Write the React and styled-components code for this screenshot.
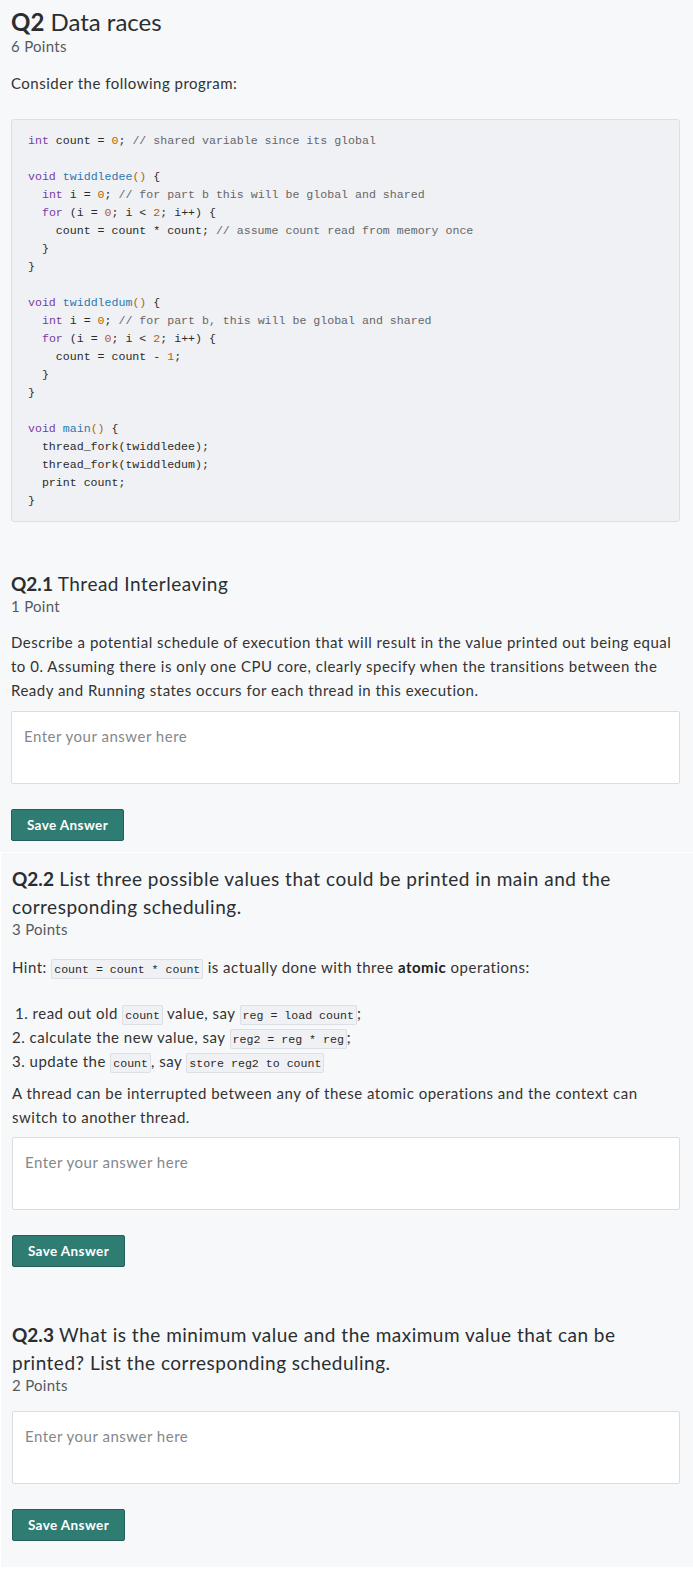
import React from 'react';
import styled, { createGlobalStyle } from 'styled-components';

const GlobalStyle = createGlobalStyle`
  html, body {
    margin: 0;
    padding: 0;
    background: #ffffff;
  }
  body {
    font-family: Lato, "Open Sans", "Liberation Sans", sans-serif;
    color: #333;
  }
`;

const Page = styled.div`
  width: 693px;
  padding-bottom: 20px;
`;

const Panel = styled.section`
  background: #f7f8fa;
  margin-left: ${props => (props.inset ? '1px' : '0')};
  margin-top: ${props => (props.inset ? '1px' : '0')};
  padding: ${props => props.pad || '0'};
  padding-right: 13px;
  padding-left: 11px;
`;

const MainTitle = styled.h1`
  margin: 0;
  font-size: 24px;
  line-height: 32px;
  font-weight: 400;
  color: #2a2e31;

  b {
    font-weight: 700;
  }
`;

const SubTitle = styled.h2`
  margin: ${props => props.mt || '0'} 0 0;
  font-size: 19px;
  line-height: 28px;
  letter-spacing: 0.5px;
  font-weight: 400;
  color: #2a2e31;

  b {
    font-weight: 700;
    letter-spacing: 0;
  }
`;

const Points = styled.div`
  margin-top: -2px;
  font-size: 15px;
  line-height: 20px;
  letter-spacing: 0.3px;
  color: #555a5f;
`;

const Text = styled.p`
  margin: ${props => props.mt || '0'} 0 ${props => props.mb || '0'};
  font-size: 15px;
  line-height: 24px;
  letter-spacing: 0.5px;
  color: #333;
  padding-left: ${props => props.indent || '0'};

  b {
    font-weight: 700;
    color: #222;
  }
`;

const CodeBlock = styled.pre`
  margin: 24px 0 0;
  padding: 12px 16px 11px;
  background: #f0f1f5;
  border: 1px solid #dcdfe5;
  border-radius: 3px;
  font-family: "Liberation Mono", "DejaVu Sans Mono", monospace;
  font-size: 11.6px;
  line-height: 18px;
  color: #2a2a2a;
  white-space: pre;
  overflow: hidden;
`;

const Kw = styled.span`
  color: #7b3aa3;
`;

const Fn = styled.span`
  color: #2b78ad;
`;

const Num = styled.span`
  color: #b0640e;
`;

const Cm = styled.span`
  color: #666;
`;

const InlineCode = styled.code`
  font-family: "Liberation Mono", "DejaVu Sans Mono", monospace;
  font-size: 11.6px;
  line-height: 1;
  letter-spacing: 0;
  background: #f0f1f5;
  border: 1px solid #dcdfe5;
  border-radius: 2px;
  padding: 3px 2px 2px;
  color: #2a2a2a;
`;

const Answer = styled.textarea`
  display: block;
  box-sizing: border-box;
  width: 100%;
  height: 73px;
  margin-top: ${props => props.mt || '9px'};
  padding: 13px 12px;
  border: 1px solid #dcdde3;
  border-radius: 2px;
  background: #ffffff;
  font-family: Lato, "Open Sans", "Liberation Sans", sans-serif;
  font-size: 15px;
  line-height: 22px;
  letter-spacing: 0.5px;
  resize: none;
  outline: none;

  &::placeholder {
    color: #84888c;
  }
`;

const SaveButton = styled.button`
  display: block;
  box-sizing: border-box;
  width: 113px;
  height: 32px;
  margin-top: 25px;
  padding: 0;
  background: #2f7c73;
  border: 1px solid #235f58;
  border-radius: 2px;
  color: #ffffff;
  font-family: Lato, "Open Sans", "Liberation Sans", sans-serif;
  font-size: 13.5px;
  font-weight: 700;
  letter-spacing: 0.4px;
  cursor: pointer;
`;

const Part = styled.div`
  padding-bottom: ${props => props.pb || '0'};
`;

const program = (
  <>
    <Kw>int</Kw> count = <Num>0</Num>; <Cm>// shared variable since its global</Cm>
    {'\n\n'}
    <Kw>void</Kw> <Fn>twiddledee</Fn><Num>()</Num> {'{'}
    {'\n  '}
    <Kw>int</Kw> i = <Num>0</Num>; <Cm>// for part b this will be global and shared</Cm>
    {'\n  '}
    <Kw>for</Kw> (i = <Num>0</Num>; i {'<'} <Num>2</Num>; i++) {'{'}
    {'\n    '}count = count * count; <Cm>// assume count read from memory once</Cm>
    {'\n  }\n}\n\n'}
    <Kw>void</Kw> <Fn>twiddledum</Fn><Num>()</Num> {'{'}
    {'\n  '}
    <Kw>int</Kw> i = <Num>0</Num>; <Cm>// for part b, this will be global and shared</Cm>
    {'\n  '}
    <Kw>for</Kw> (i = <Num>0</Num>; i {'<'} <Num>2</Num>; i++) {'{'}
    {'\n    '}count = count - <Num>1</Num>;
    {'\n  }\n}\n\n'}
    <Kw>void</Kw> <Fn>main</Fn><Num>()</Num> {'{'}
    {'\n  thread_fork(twiddledee);\n  thread_fork(twiddledum);\n  print count;\n}'}
  </>
);

export default function App() {
  return (
    <Page>
      <GlobalStyle />
      <Panel pad="6px 0 11px">
        <MainTitle>
          <b>Q2</b> Data races
        </MainTitle>
        <Points>6 Points</Points>
        <Text mt="15px">Consider the following program:</Text>
        <CodeBlock>{program}</CodeBlock>

        <SubTitle mt="48px">
          <b>Q2.1</b> Thread Interleaving
        </SubTitle>
        <Points>1 Point</Points>
        <Text mt="14px">
          Describe a potential schedule of execution that will result in the value printed out being equal
          to 0. Assuming there is only one CPU core, clearly specify when the transitions between the
          Ready and Running states occurs for each thread in this execution.
        </Text>
        <Answer placeholder="Enter your answer here" />
        <SaveButton>Save Answer</SaveButton>
      </Panel>

      <Panel inset pad="12px 0 26px">
        <Part pb="54px">
          <SubTitle>
            <b>Q2.2</b> List three possible values that could be printed in main and the corresponding
            scheduling.
          </SubTitle>
          <Points>3 Points</Points>
          <Text mt="16px" mb="22px">
            Hint: <InlineCode>count = count * count</InlineCode> is actually done with three <b>atomic</b>{' '}
            operations:
          </Text>
          <Text indent="3px">
            1. read out old <InlineCode>count</InlineCode> value, say <InlineCode>reg = load count</InlineCode>;
          </Text>
          <Text>
            2. calculate the new value, say <InlineCode>reg2 = reg * reg</InlineCode>;
          </Text>
          <Text>
            3. update the <InlineCode>count</InlineCode>, say <InlineCode>store reg2 to count</InlineCode>
          </Text>
          <Text mt="8px">
            A thread can be interrupted between any of these atomic operations and the context can switch to
            another thread.
          </Text>
          <Answer mt="8px" placeholder="Enter your answer here" />
          <SaveButton>Save Answer</SaveButton>
        </Part>

        <Part>
          <SubTitle>
            <b>Q2.3</b> What is the minimum value and the maximum value that can be printed? List the
            corresponding scheduling.
          </SubTitle>
          <Points>2 Points</Points>
          <Answer mt="16px" placeholder="Enter your answer here" />
          <SaveButton>Save Answer</SaveButton>
        </Part>
      </Panel>
    </Page>
  );
}
